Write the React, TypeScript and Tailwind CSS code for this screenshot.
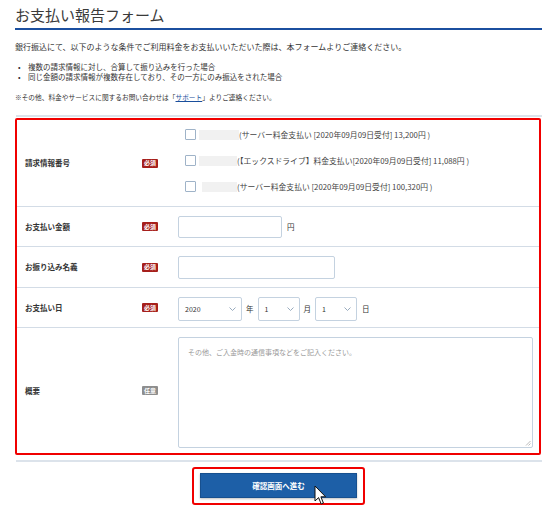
import type { ReactNode } from 'react'

const invoices = [
  { blur: 'ml-[3px] w-[40px]', text: '(サーバー料金支払い [2020年09月09日受付] 13,200円 )' },
  { blur: 'ml-[3px] w-[38px]', text: '(【エックスドライブ】料金支払い[2020年09月09日受付] 11,088円 )' },
  { blur: 'ml-[6px] w-[35px]', text: '(サーバー料金支払い [2020年09月09日受付] 100,320円 )' },
]

export default function App() {
  return (
    <div className="h-[517px] w-[550px] overflow-hidden bg-white pl-[15px] pr-[8px] font-['Noto_Sans_CJK_JP','Liberation_Sans',sans-serif] text-[#333]">
      <h1 className="border-b-2 border-[#1b4f9f] pt-[6px] pb-[4px] text-[15px] leading-[18px] font-normal text-[#3a3a3a]">
        お支払い報告フォーム
      </h1>
      <p className="mt-[11px] text-[8px] leading-[12px]">
        銀行振込にて、以下のような条件でご利用料金をお支払いいただいた際は、本フォームよりご連絡ください。
      </p>
      <ul className="mt-[9px] text-[7.5px] leading-[10px]">
        <li className="flex">
          <span className="w-[13px] pl-[3px]">•</span>
          複数の請求情報に対し、合算して振り込みを行った場合
        </li>
        <li className="flex">
          <span className="w-[13px] pl-[3px]">•</span>
          同じ金額の請求情報が複数存在しており、その一方にのみ振込をされた場合
        </li>
      </ul>
      <p className="mt-[9px] text-[6.7px] leading-[12px]">
        ※その他、料金やサービスに関するお問い合わせは「
        <span className="text-[#1a4f9c] underline">サポート</span>
        」よりご連絡ください。
      </p>

      <div className="mt-[12px] ml-[1px] h-[2px] bg-[#dce3eb]" />

      <div className="mt-[1px] mr-[1px] rounded-[2px] border-2 border-[#f00000]">
        <Row label="請求情報番号" height="h-[87px]">
          <div className="flex flex-col gap-[10px] pb-[5px]">
            {invoices.map((item) => (
              <div key={item.text} className="flex h-[16px] items-center pl-[7px]">
                <span className="h-[11px] w-[11px] rounded-[1px] border border-[#9fb3c8] bg-white" />
                <span className={`h-[10px] bg-[#f1f1f1] ${item.blur}`} />
                <span className="text-[7.8px] whitespace-nowrap text-[#444]">{item.text}</span>
              </div>
            ))}
          </div>
        </Row>
        <Row label="お支払い金額" height="h-[40px]">
          <div className="flex items-center gap-[5px]">
            <div className="h-[22px] w-[104px] rounded-[2px] border border-[#c4d2e0] bg-white" />
            <span className="text-[7.5px]">円</span>
          </div>
        </Row>
        <Row label="お振り込み名義" height="h-[41px]">
          <div className="h-[23px] w-[157px] rounded-[2px] border border-[#c4d2e0] bg-white" />
        </Row>
        <Row label="お支払い日" height="h-[40px]">
          <div className="mt-[3px] flex items-center text-[7.5px]">
            <Select value="2020" width="w-[64px]" />
            <span className="mx-[4px]">年</span>
            <Select value="1" width="w-[42px]" />
            <span className="mx-[4px]">月</span>
            <Select value="1" width="w-[42px]" />
            <span className="ml-[5px]">日</span>
          </div>
        </Row>
        <Row label="概要" height="h-[125px]" optional last>
          <div className="relative mt-[4px] mr-[6px] h-[111px] flex-1 rounded-[2px] border border-[#c4d2e0] bg-white px-[9px] py-[9px] text-[7px] text-[#9a9a9a]">
            その他、ご入金時の通信事項などをご記入ください。
            <svg className="absolute right-[1px] bottom-[1px]" width="6" height="6" viewBox="0 0 6 6">
              <path d="M5.5 1 L1 5.5 M5.5 3.5 L3.5 5.5" stroke="#aaa" strokeWidth="0.8" />
            </svg>
          </div>
        </Row>
      </div>

      <div className="mt-[5px] ml-[1px] h-[2px] bg-[#dce3eb]" />

      <div className="mt-[5px] flex justify-center">
        <div className="rounded-[3px] border-2 border-[#f00000] px-[6px] pt-[4px] pb-[5px]">
          <button className="relative flex h-[25px] w-[157px] items-center justify-center border border-[#17508f] bg-[#1d5fa7] text-[7.5px] font-bold text-white shadow-[0_1px_2px_rgba(0,0,0,0.25)]">
            確認画面へ進む
            <svg className="absolute top-[11px] left-[113px]" width="13" height="21" viewBox="0 0 13 21">
              <path
                d="M1 1 L1 16 L4.6 12.6 L7.2 19 L9.4 18 L6.9 11.8 L11.6 11.8 Z"
                fill="#fff"
                stroke="#111"
                strokeWidth="1"
                strokeLinejoin="round"
              />
            </svg>
          </button>
        </div>
      </div>
    </div>
  )
}

function Row({
  label,
  height,
  optional = false,
  last = false,
  children,
}: {
  label: string
  height: string
  optional?: boolean
  last?: boolean
  children: ReactNode
}) {
  return (
    <div className={`flex items-center pl-[8px] ${height} ${last ? '' : 'border-b border-[#d3dce6]'}`}>
      <span className="w-[117px] text-[7.5px] font-bold text-[#333]">{label}</span>
      <span
        className={`flex h-[9px] w-[16px] items-center justify-center rounded-[1px] text-[6px] font-bold leading-none text-white ${
          optional ? 'bg-[#8e8e8e]' : 'bg-[#a61f1b]'
        }`}
      >
        {optional ? '任意' : '必須'}
      </span>
      <div className="ml-[20px] flex flex-1 items-center">{children}</div>
    </div>
  )
}

function Select({ value, width }: { value: string; width: string }) {
  return (
    <div
      className={`flex h-[24px] items-center justify-between rounded-[2px] border border-[#c4d2e0] bg-white pr-[5px] pl-[6px] text-[7px] text-[#333] ${width}`}
    >
      <span>{value}</span>
      <svg width="7" height="4" viewBox="0 0 7 4">
        <path d="M0.5 0.5 L3.5 3.5 L6.5 0.5" fill="none" stroke="#8da2b7" strokeWidth="0.9" />
      </svg>
    </div>
  )
}
